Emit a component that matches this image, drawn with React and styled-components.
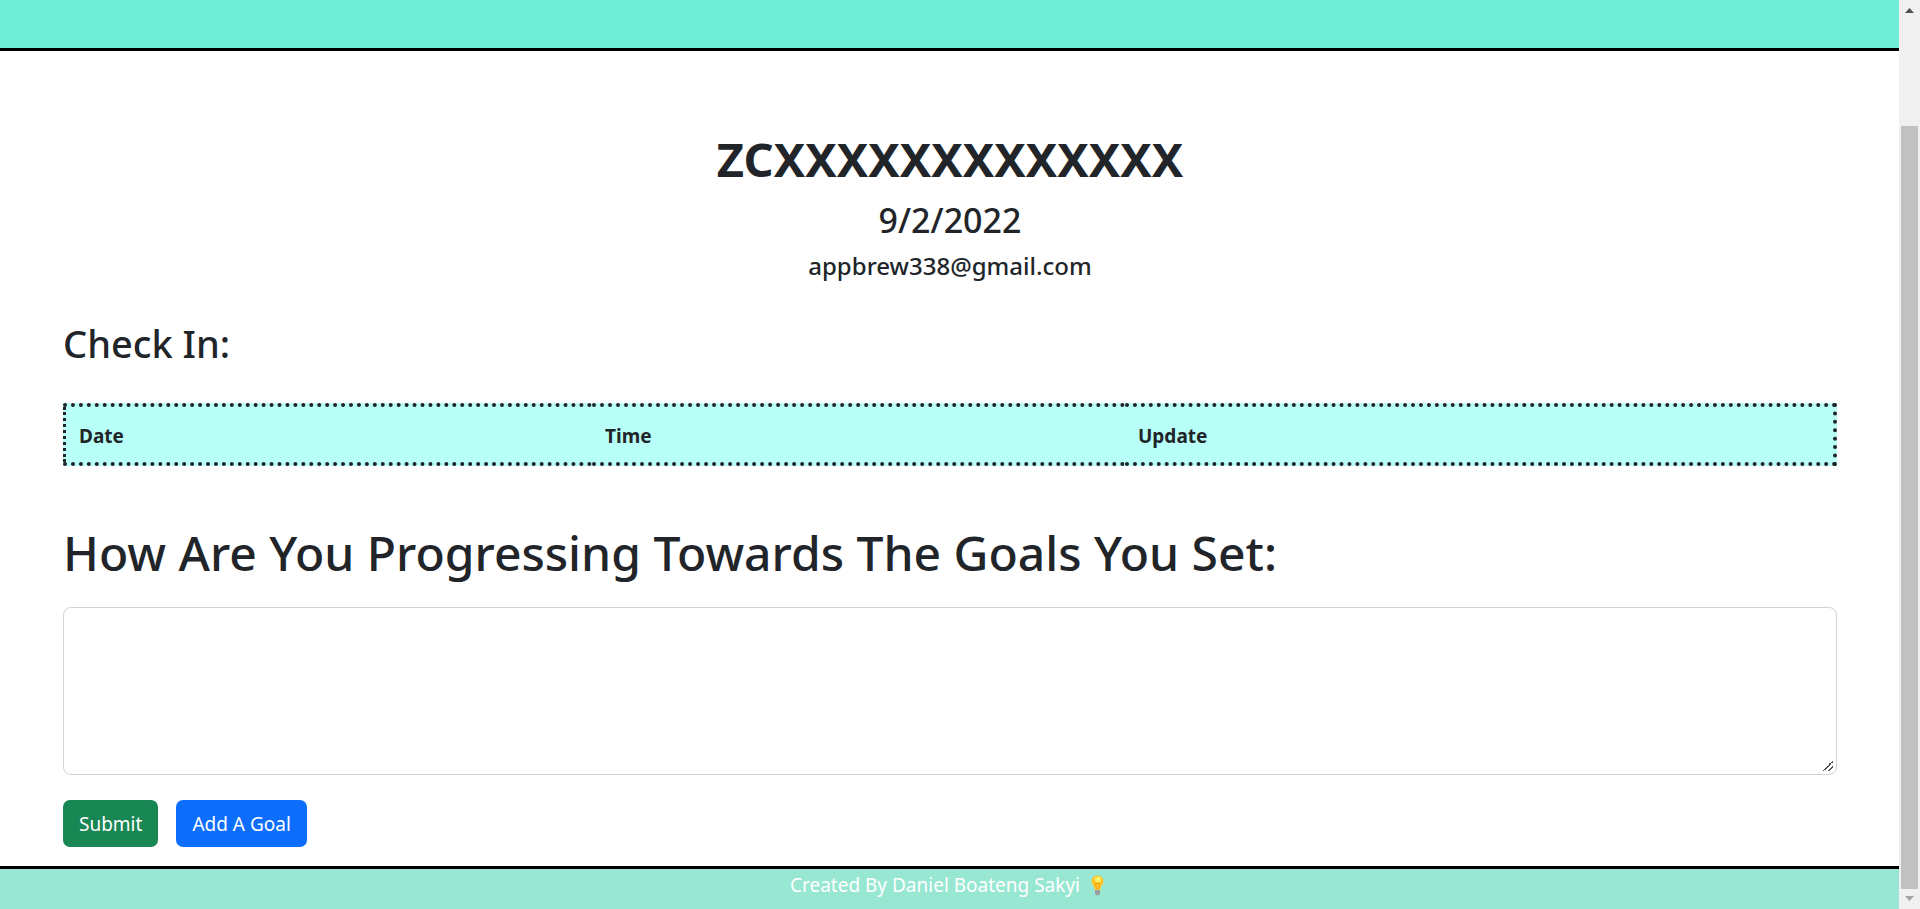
import React from "react";
import styled, { createGlobalStyle } from "styled-components";

const GlobalStyle = createGlobalStyle`
  *, *::before, *::after { box-sizing: border-box; }
  body {
    margin: 0;
    background: #fff;
    color: #212529;
    font-family: "Noto Sans", "Open Sans", sans-serif;
    font-size: 20px;
    line-height: 30px;
  }
`;

const Window = styled.div`
  display: flex;
  min-height: 100vh;
`;

const Page = styled.div`
  flex: 1;
  min-width: 0;
  display: flex;
  flex-direction: column;
`;

const Header = styled.header`
  height: 51px;
  background: #70eed8;
  border-bottom: 3px solid #000;
`;

const Main = styled.main`
  flex: 1;
  padding: 78px 62px 18px 63px;
`;

const Profile = styled.section`
  text-align: center;
`;

const Name = styled.h1`
  margin: 0 0 10px;
  font-size: 47px;
  line-height: 60px;
  font-weight: 700;
`;

const JoinDate = styled.h2`
  margin: 0 0 10px;
  font-size: 34px;
  line-height: 42px;
  font-weight: 500;
`;

const Email = styled.h4`
  margin: 0;
  font-size: 24px;
  line-height: 30px;
  font-weight: 500;
`;

const SectionTitle = styled.h2`
  margin: 38px 0 36px;
  font-size: 38px;
  line-height: 48px;
  font-weight: 500;
`;

const CheckInTable = styled.table`
  width: 100%;
  table-layout: fixed;
  border-collapse: collapse;
  background: #b8fff7;
`;

const HeadRow = styled.tr`
  border: 4px dotted #212529;
  border-left-width: 3px;
`;

const HeadCell = styled.th`
  width: ${(p) => p.$width};
  height: 59px;
  padding: 2px 13px 0;
  text-align: left;
  font-size: 19px;
  font-weight: 700;
`;

const Form = styled.form`
  margin: 57px 0 0;
`;

const Question = styled.label`
  display: block;
  margin-bottom: 24px;
  font-size: 48px;
  line-height: 60px;
  font-weight: 500;
`;

const Answer = styled.textarea`
  display: block;
  width: 100%;
  height: 168px;
  padding: 8px 15px;
  border: 1px solid #ced4da;
  border-radius: 8px;
  background: #fff;
  font: inherit;
  resize: vertical;

  &::-webkit-resizer {
    background: linear-gradient(
        135deg,
        transparent 45%,
        #555 45%,
        #555 55%,
        transparent 55%,
        transparent 71%,
        #555 71%,
        #555 81%,
        transparent 81%
      )
      2px 2px / 10px 10px no-repeat;
  }
`;

const Actions = styled.div`
  display: flex;
  gap: 18px;
  margin-top: 25px;
`;

const Button = styled.button`
  height: 47px;
  padding: 0 16px;
  border: 0;
  border-radius: 7px;
  background: ${(p) => p.$color};
  color: #fff;
  font: inherit;
  font-size: 19px;
`;

const Footer = styled.footer`
  height: 43px;
  border-top: 3px solid #000;
  background: #97e7d2;
  color: #fff;
  font-size: 19px;
  line-height: 32px;
  display: flex;
  justify-content: center;
  gap: 11px;
`;

const Bulb = styled.svg`
  width: 13px;
  height: 21px;
  margin: 6px 5px 0 0;
`;

const ScrollTrack = styled.div`
  width: 21px;
  background: #f0f0f0;
  display: flex;
  flex-direction: column;
  align-items: center;
`;

const ScrollArrow = styled.svg`
  width: 21px;
  height: 20px;
`;

const ScrollThumb = styled.div`
  flex: 1;
  width: 17px;
  margin-top: 106px;
  background: #c1c1c1;
`;

const columns = [
  { label: "Date", width: "29.8%" },
  { label: "Time", width: "30.1%" },
  { label: "Update", width: "40.1%" },
];

export default function App() {
  return (
    <Window>
      <GlobalStyle />
      <Page>
        <Header />
        <Main>
          <Profile>
            <Name>ZCXXXXXXXXXXXXX</Name>
            <JoinDate>9/2/2022</JoinDate>
            <Email>appbrew338@gmail.com</Email>
          </Profile>
          <SectionTitle>Check In:</SectionTitle>
          <CheckInTable>
            <thead>
              <HeadRow>
                {columns.map((c) => (
                  <HeadCell key={c.label} scope="col" $width={c.width}>
                    {c.label}
                  </HeadCell>
                ))}
              </HeadRow>
            </thead>
          </CheckInTable>
          <Form onSubmit={(e) => e.preventDefault()}>
            <Question htmlFor="progress">
              How Are You Progressing Towards The Goals You Set:
            </Question>
            <Answer id="progress" name="progress" />
            <Actions>
              <Button type="submit" $color="#198754">Submit</Button>
              <Button type="button" $color="#0d6efd">Add A Goal</Button>
            </Actions>
          </Form>
        </Main>
        <Footer>
          <span>Created By Daniel Boateng Sakyi</span>
          <Bulb viewBox="0 0 13 21" aria-hidden="true">
            <path d="M6.5 0.5C3 0.5 0.5 3 0.5 6.3c0 2.5 1.6 3.8 2.4 5.4 0.6 1.2 0.7 2.3 0.9 3.3h5.4c0.2-1 0.3-2.1 0.9-3.3 0.8-1.6 2.4-2.9 2.4-5.4C12.5 3 10 0.5 6.5 0.5z" fill="#fdc62b" />
            <ellipse cx="7" cy="4.5" rx="3.2" ry="2.8" fill="#fff26b" />
            <path d="M4.3 7.5l1.3 7M8.7 7.5l-1.3 7M4.3 8l2.2 1 2.2-1" fill="none" stroke="#f09a1a" strokeWidth="0.9" />
            <path d="M4 15h5v3.5l-1.5 2h-2L4 18.5z" fill="#a5a9ad" />
            <path d="M4 16.7h5M4 18.3h5" stroke="#7d8287" strokeWidth="0.6" />
          </Bulb>
        </Footer>
      </Page>
      <ScrollTrack aria-hidden="true">
        <ScrollArrow viewBox="0 0 21 20">
          <path d="M6 13L10.5 8L15 13z" fill="#505050" />
        </ScrollArrow>
        <ScrollThumb />
        <ScrollArrow viewBox="0 0 21 20">
          <path d="M6 7L10.5 12L15 7z" fill="#a3a3a3" />
        </ScrollArrow>
      </ScrollTrack>
    </Window>
  );
}
